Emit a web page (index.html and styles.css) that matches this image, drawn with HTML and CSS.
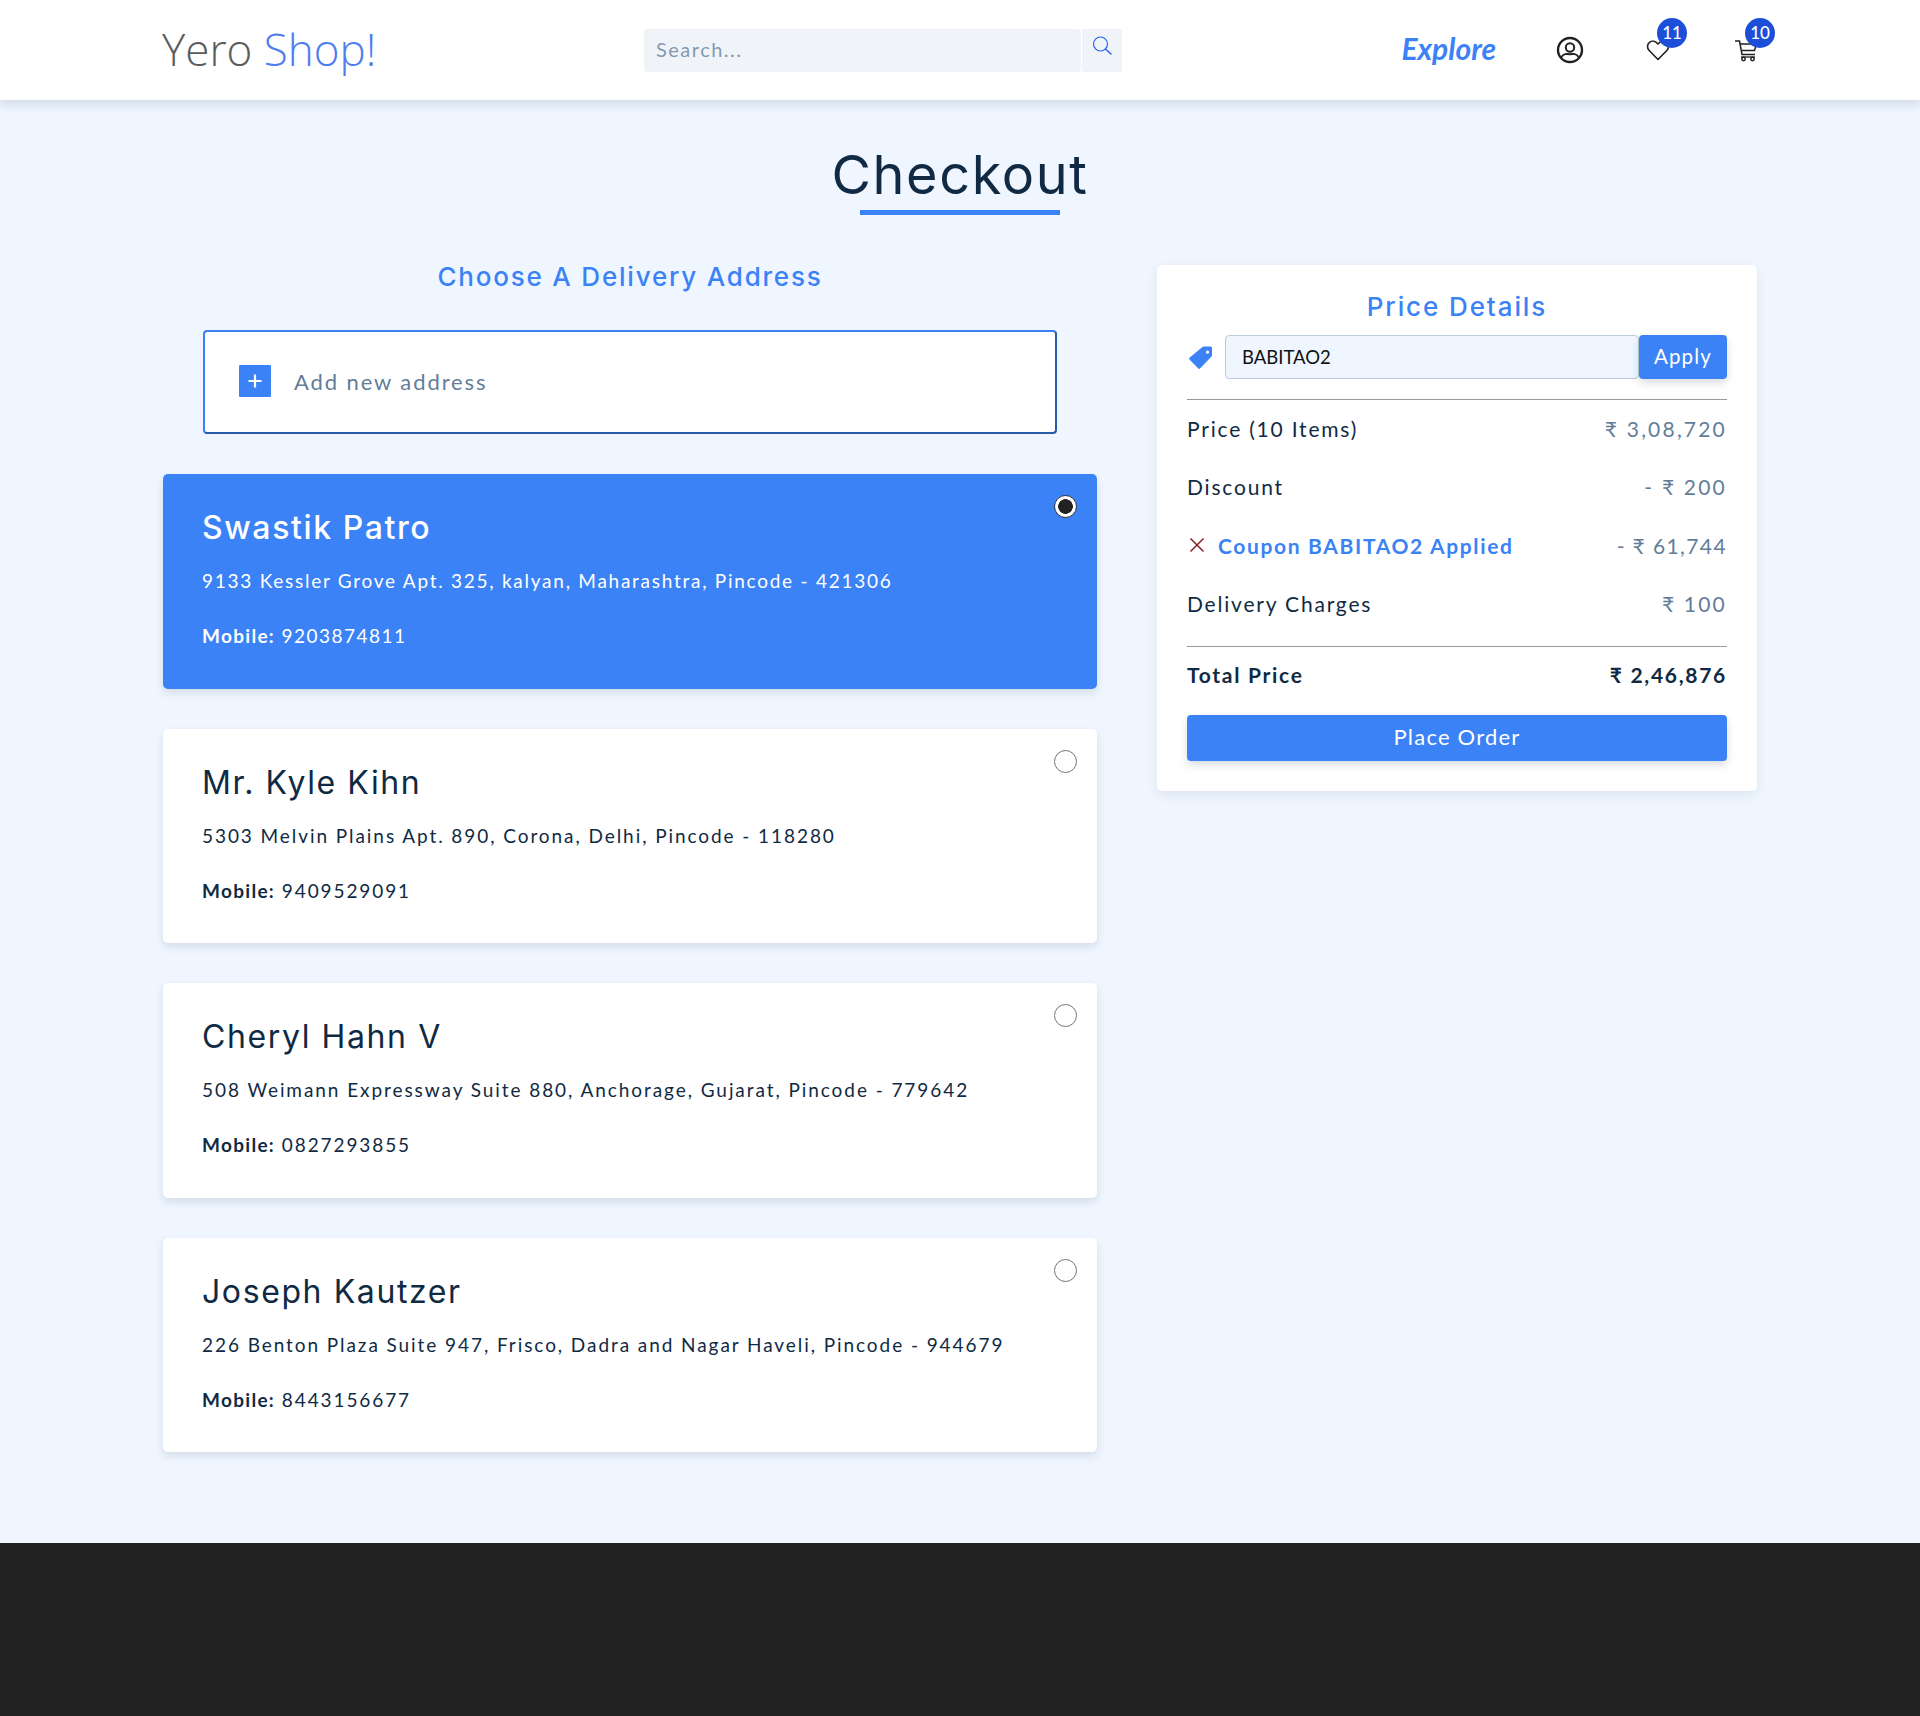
FILE: index.html
```html
<!DOCTYPE html>
<html lang="en">
<head>
<meta charset="utf-8">
<title>Checkout</title>
<link rel="stylesheet" href="styles.css">
</head>
<body>
<nav class="nav">
  <a class="logo"><span class="logo-a">Yero</span> <span class="logo-b">Shop!</span></a>
  <div class="search">
    <div class="search-field">Search...</div>
    <div class="search-btn">
      <svg width="22" height="22" viewBox="0 0 22 22" fill="none" stroke="#2563eb" stroke-width="1.200" stroke-linecap="round"><circle cx="9.500" cy="9" r="7"/><path d="M14.500 14l5.500 5" stroke-width="1.500"/></svg>
    </div>
  </div>
  <div class="nav-right">
    <a class="explore">Explore</a>
    <a class="nav-icon">
      <svg width="28" height="28" viewBox="0 0 28 28" fill="none" stroke="#212121" stroke-width="2.400"><circle cx="14" cy="14" r="12"/><circle cx="14" cy="11.500" r="4.200" stroke-width="2"/><path d="M5.500 21c2-3.500 5-3.200 8.500-2.800 3.500-.4 6.500-.7 8.500 2.800" stroke-width="2"/></svg>
    </a>
    <a class="nav-icon">
      <svg width="24" height="24" viewBox="0 0 24 24" fill="none" stroke="#212121" stroke-width="1.600" stroke-linejoin="round"><path d="M12 21.500 3.200 12.500C.8 10 1 6.300 3.500 4.300c2.500-1.900 6-1.400 8.500 1.700 2.500-3.100 6-3.600 8.500-1.700 2.500 2 2.700 5.700.3 8.200z"/></svg>
      <span class="badge">11</span>
    </a>
    <a class="nav-icon">
      <svg width="24" height="24" viewBox="0 0 24 24" fill="none" stroke="#212121" stroke-width="1.500"><path d="M1 3h4.500l2.500 13.500h13"/><path d="M6 6h16.500l-2 6.500H7.200"/><path d="M7 19h14" stroke-width="1.300"/><circle cx="9.500" cy="21" r="1.700"/><circle cx="18.500" cy="21" r="1.700"/></svg>
      <span class="badge">10</span>
    </a>
  </div>
</nav>

<main class="main">
  <h1 class="title">Checkout</h1>
  <div class="layout">
    <section class="addresses">
      <h2 class="subhead">Choose A Delivery Address</h2>
      <div class="add-new">
        <span class="plus"><svg width="16" height="16" viewBox="0 0 16 16" stroke="#fff" stroke-width="2.200"><path d="M8 1.500v13M1.500 8h13"/></svg></span>
        <span class="add-text">Add new address</span>
      </div>
      <article class="card selected">
        <input class="radio" type="radio" name="addr" checked>
        <h3 class="name">Swastik Patro</h3>
        <p class="addr">9133 Kessler Grove Apt. 325, kalyan, Maharashtra, Pincode - 421306</p>
        <p class="mobile"><b>Mobile:</b> 9203874811</p>
      </article>
      <article class="card">
        <input class="radio" type="radio" name="addr">
        <h3 class="name">Mr. Kyle Kihn</h3>
        <p class="addr">5303 Melvin Plains Apt. 890, Corona, Delhi, Pincode - 118280</p>
        <p class="mobile"><b>Mobile:</b> 9409529091</p>
      </article>
      <article class="card">
        <input class="radio" type="radio" name="addr">
        <h3 class="name">Cheryl Hahn V</h3>
        <p class="addr">508 Weimann Expressway Suite 880, Anchorage, Gujarat, Pincode - 779642</p>
        <p class="mobile"><b>Mobile:</b> 0827293855</p>
      </article>
      <article class="card">
        <input class="radio" type="radio" name="addr">
        <h3 class="name">Joseph Kautzer</h3>
        <p class="addr">226 Benton Plaza Suite 947, Frisco, Dadra and Nagar Haveli, Pincode - 944679</p>
        <p class="mobile"><b>Mobile:</b> 8443156677</p>
      </article>
    </section>

    <aside class="price">
      <h2 class="price-title">Price Details</h2>
      <div class="coupon">
        <svg class="tag" width="26" height="26" viewBox="0 0 26 26"><path fill="#3b82f6" fill-rule="evenodd" d="M15 2.500h7.500a1.500 1.500 0 0 1 1.500 1.500v8L12 24.500a1.200 1.200 0 0 1-1.700 0L1.500 15.500a1.200 1.200 0 0 1 0-1.700zM19.500 6.500a1.600 1.600 0 1 0 .01 0z"/></svg>
        <div class="coupon-input">BABITAO2</div>
        <button class="apply">Apply</button>
      </div>
      <div class="rows">
        <div class="row"><span>Price (10 Items)</span><span class="val">₹ 3,08,720</span></div>
        <div class="row"><span>Discount</span><span class="val">- ₹ 200</span></div>
        <div class="row"><span class="applied"><svg width="18" height="18" viewBox="0 0 18 18" stroke="#8b1f2b" stroke-width="1.500"><path d="M2.500 2.500l13 13M15.500 2.500l-13 13"/></svg><b>Coupon BABITAO2 Applied</b></span><span class="val tight">- ₹ 61,744</span></div>
        <div class="row"><span>Delivery Charges</span><span class="val">₹ 100</span></div>
      </div>
      <div class="total"><span>Total Price</span><span>₹ 2,46,876</span></div>
      <button class="order">Place Order</button>
    </aside>
  </div>
</main>
<footer class="footer"></footer>
</body>
</html>
```

FILE: styles.css
```css
* { box-sizing: border-box; }
html, body { margin: 0; padding: 0; }
body {
  min-height: 1716px;
  display: flex;
  flex-direction: column;
  background: #eff6ff;
  color: #102a43;
  font-family: Lato, "Open Sans", sans-serif;
  font-size: 19px;
  letter-spacing: 1.5px;
}
h1, h2, h3, p { margin: 0; font-weight: 400; }

.nav {
  height: 100px;
  padding: 0 160px 0 162px;
  display: flex;
  align-items: center;
  background: #fff;
  box-shadow: 0 4px 10px rgba(16, 42, 67, .14);
}
.logo {
  width: 482px;
  margin-top: -2px;
  font-family: "Open Sans", sans-serif;
  font-weight: 300;
  font-size: 44px;
  letter-spacing: 0;
  white-space: nowrap;
}
.logo-a { color: #5c5c5c; }
.logo-b { color: #4f7df0; }
.search { display: flex; width: 478px; height: 43px; }
.search-field {
  flex: 1;
  padding-left: 12px;
  font-size: 20px;
  line-height: 41px;
  background: #f0f4f8;
  border-radius: 4px;
  color: #829ab1;
}
.search-btn {
  width: 40px;
  margin-left: 1px;
  padding: 6px 0 0 9px;
  background: #f0f4f8;
}
.nav-right { margin-left: auto; display: flex; align-items: center; }
.explore {
  margin-right: 60px;
  margin-top: -4px;
  color: #3b82f6;
  font-style: italic;
  font-weight: 700;
  font-size: 30px;
  letter-spacing: 0;
}
.nav-icon {
  position: relative;
  width: 28px;
  height: 28px;
  margin-right: 60px;
  display: flex;
  align-items: center;
  justify-content: center;
}
.nav-icon:last-child { margin-right: 0; }
.badge {
  position: absolute;
  top: -18px;
  left: 13px;
  width: 30px;
  height: 30px;
  border-radius: 50%;
  background: #1d4ed8;
  color: #fff;
  font-size: 17px;
  font-weight: 500;
  letter-spacing: 0;
  line-height: 30px;
  text-align: center;
}

.main { flex: 1; padding: 0 163px; }
.title {
  width: 200px;
  margin: 44px auto 50px;
  height: 71px;
  border-bottom: 5px solid #3b82f6;
  display: flex;
  justify-content: center;
  font-family: Inter, sans-serif;
  font-size: 54px;
  font-weight: 400;
  line-height: 62px;
  letter-spacing: 1.600px;
  white-space: nowrap;
}
.layout { display: flex; gap: 60px; align-items: flex-start; }
.addresses { width: 934px; display: flex; flex-direction: column; }
.subhead, .price-title {
  font-family: Inter, sans-serif;
  font-size: 26px;
  font-weight: 450;
  line-height: 32px;
  letter-spacing: 1.800px;
  color: #3b82f6;
  text-align: center;
}
.subhead { margin-bottom: 37px; margin-top: -4px; }
.add-new {
  width: 854px;
  height: 104px;
  margin: 0 auto 40px;
  padding: 0 0 2px 34px;
  display: flex;
  align-items: center;
  gap: 23px;
  background: #fff;
  border: 2px solid #3b82f6;
  border-bottom-color: #2a5ba8;
  border-right-color: #2a5ba8;
  border-radius: 4px;
}
.plus {
  width: 32px;
  height: 32px;
  display: flex;
  align-items: center;
  justify-content: center;
  background: #3b82f6;
  border-radius: 1px;
}
.add-text { color: #627d98; font-size: 22px; letter-spacing: 1.900px; }
.card {
  position: relative;
  height: 214.500px;
  margin-bottom: 40px;
  padding: 36px 39px 0;
  background: #fff;
  border-radius: 5px;
  box-shadow: 0 4px 8px rgba(16, 42, 67, .12);
}
.card.selected { background: #3b82f6; color: #fff; }
.name {
  font-family: Inter, sans-serif;
  font-size: 32px;
  font-weight: 400;
  line-height: 36px;
  letter-spacing: 1.600px;
}
.selected .name { font-weight: 500; }
.addr { margin-top: 23px; line-height: 24px; letter-spacing: 1.930px; }
.selected .addr { letter-spacing: 1.740px; }
.mobile { margin-top: 31px; line-height: 24px; letter-spacing: 1.900px; }
.mobile b { letter-spacing: 1.300px; }
.selected .mobile { letter-spacing: 1.500px; }
.radio {
  position: absolute;
  top: 21px;
  right: 20px;
  width: 23px;
  height: 23px;
  margin: 0;
  appearance: none;
  background: #fff;
  border: 1.5px solid #757575;
  border-radius: 50%;
}
.radio:checked { border-color: #333; background: radial-gradient(circle, #212121 0 7px, #fff 7.600px); }

.price {
  width: 600px;
  height: 526px;
  padding: 26px 30px 30px;
  background: #fff;
  border-radius: 5px;
  box-shadow: 0 4px 12px rgba(16, 42, 67, .08);
}
.price-title { margin-bottom: 12px; letter-spacing: 1.900px; }
.coupon { display: flex; align-items: center; height: 44px; }
.tag { flex: none; margin: 0 11px 0 1px; }
.coupon-input {
  flex: 1;
  height: 44px;
  padding-left: 16px;
  line-height: 42px;
  background: #eff6ff;
  border: 1px solid #bcccdc;
  border-radius: 4px;
  color: #111;
  font-size: 18.500px;
  letter-spacing: 0;
}
.apply, .order {
  border: 0;
  background: #3b82f6;
  color: #fff;
  font: inherit;
  letter-spacing: 1.200px;
  border-radius: 4px;
  box-shadow: 0 4px 8px rgba(16, 42, 67, .16);
}
.apply { width: 88px; height: 44px; padding: 0 0 2px; font-size: 20.500px; }
.rows {
  margin-top: 20px;
  padding: 0 0 13px;
  border-top: 1px solid #9a9a9a;
  border-bottom: 1px solid #9a9a9a;
  font-size: 21px;
  letter-spacing: 1.800px;
}
.row {
  height: 58.500px;
  display: flex;
  align-items: center;
  justify-content: space-between;
}
.row:first-child { margin-top: -1px; }
.val { color: #627d98; letter-spacing: 2.200px; }
.val.tight { letter-spacing: 1.400px; }
.applied { display: flex; align-items: center; gap: 12px; padding-left: 1px; color: #3b82f6; letter-spacing: 1.650px; }
.applied b { font-weight: 700; }
.total {
  height: 55px;
  display: flex;
  align-items: center;
  justify-content: space-between;
  font-size: 21px;
  letter-spacing: 1.700px;
  font-weight: 700;
}
.order { display: block; width: 100%; height: 46px; margin-top: 13px; padding: 0 0 4px; font-size: 22px; }
.footer { height: 173px; background: #212121; }
```
